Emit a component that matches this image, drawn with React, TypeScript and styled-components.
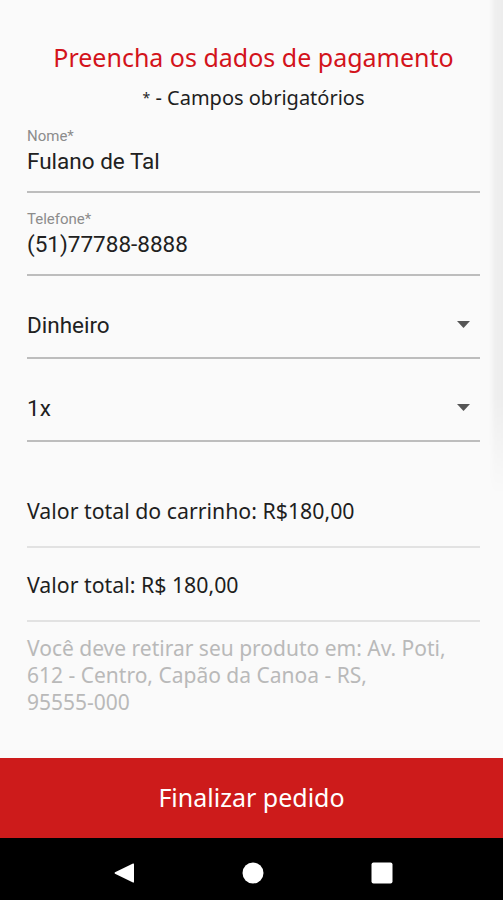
import React from "react";
import styled, { createGlobalStyle } from "styled-components";

const GlobalStyle = createGlobalStyle`
  html, body { margin: 0; padding: 0; background: #fafafa; }
  * { box-sizing: border-box; }
`;

const Screen = styled.div`
  position: relative;
  width: 503px;
  height: 900px;
  display: flex;
  flex-direction: column;
  background: #fafafa;
  overflow: hidden;
`;

const EdgeShade = styled.div`
  position: absolute;
  top: 0;
  right: 0;
  width: 14px;
  height: 495px;
  background: linear-gradient(to right, rgba(0,0,0,0) 0%, rgba(0,0,0,0.045) 45%, rgba(0,0,0,0.05) 100%);
  -webkit-mask-image: linear-gradient(to bottom, #000 0%, #000 80%, transparent 100%);
  mask-image: linear-gradient(to bottom, #000 0%, #000 80%, transparent 100%);
  pointer-events: none;
`;

const Content = styled.div`
  flex: 1;
  padding: 41px 23px 0 27px;
  display: flex;
  flex-direction: column;
`;

const Title = styled.h1`
  margin: 0;
  font-family: "Noto Sans", sans-serif;
  font-weight: 400;
  font-size: 25px;
  line-height: 32px;
  color: #d3131b;
  text-align: center;
`;

const Subtitle = styled.div`
  margin-top: 12px;
  font-family: "Noto Sans", sans-serif;
  font-size: 20px;
  line-height: 26px;
  color: #1e1e1e;
  text-align: center;
`;

const Star = styled.span`
  font-size: 14px;
  vertical-align: 2px;
`;

const Form = styled.div`
  margin-top: 16px;
  display: flex;
  flex-direction: column;
  gap: 17px;
`;

const FieldBox = styled.div`
  height: 66px;
  border-bottom: 2px solid #bdbdbd;
  display: flex;
  flex-direction: column;
`;

const Label = styled.div`
  font-family: Roboto, sans-serif;
  font-size: 15px;
  line-height: 18px;
  color: #8c8c8c;
`;

const Value = styled.div`
  margin-top: 2px;
  font-family: Roboto, sans-serif;
  font-size: 22.5px;
  line-height: 28px;
  color: #212121;
`;

const SelectBox = styled.div`
  height: 66px;
  border-bottom: 2px solid #bdbdbd;
  display: flex;
  align-items: flex-end;
  justify-content: space-between;
  padding: 0 10px 18px 0;
`;

const SelectValue = styled.div`
  font-family: Roboto, sans-serif;
  font-size: 22.5px;
  line-height: 28px;
  color: #212121;
`;

const Caret = styled.svg`
  width: 13px;
  height: 7px;
  margin-bottom: 11px;
  fill: #555;
`;

const Summary = styled.div`
  margin-top: 32px;
  display: flex;
  flex-direction: column;
`;

const SummaryRow = styled.div`
  padding: 23px 0 21px;
  border-bottom: 2px solid #e2e2e2;
  font-family: "Noto Sans", sans-serif;
  font-size: 21.3px;
  line-height: 28px;
  color: #1e1e1e;
`;

const Address = styled.div`
  margin-top: 13px;
  font-family: "Noto Sans", sans-serif;
  font-size: 21px;
  line-height: 27px;
  color: #b9b9b9;
  padding-right: 20px;
`;

const NoBreak = styled.span`
  white-space: nowrap;
`;

const FinishButton = styled.button`
  height: 80px;
  flex: none;
  border: none;
  margin: 0;
  width: 100%;
  background: #cd1b1b;
  color: #fff;
  font-family: "Noto Sans", sans-serif;
  font-size: 25px;
  display: flex;
  align-items: center;
  justify-content: center;
  padding: 0 0 2px;
`;

const NavBar = styled.nav`
  height: 62px;
  flex: none;
  background: #000;
  display: grid;
  grid-template-columns: 113px 22px 107px 22px 107px 22px 1fr;
  align-items: center;
  padding-top: 8px;
`;

const NavIcon = styled.svg<{ $col: number }>`
  grid-column: ${(p) => p.$col};
  width: 22px;
  height: 22px;
  fill: #fff;
`;

function TextField({ label, value }: { label: string; value: string }) {
  return (
    <FieldBox>
      <Label>{label}</Label>
      <Value>{value}</Value>
    </FieldBox>
  );
}

function SelectField({ value }: { value: string }) {
  return (
    <SelectBox>
      <SelectValue>{value}</SelectValue>
      <Caret viewBox="0 0 13 7">
        <path d="M0 0 L13 0 L6.5 7 Z" />
      </Caret>
    </SelectBox>
  );
}

export default function App() {
  return (
    <>
      <GlobalStyle />
      <Screen>
        <Content>
          <Title>Preencha os dados de pagamento</Title>
          <Subtitle>
            <Star>*</Star> - Campos obrigatórios
          </Subtitle>
          <Form>
            <TextField label="Nome*" value="Fulano de Tal" />
            <TextField label="Telefone*" value="(51)77788-8888" />
            <SelectField value="Dinheiro" />
            <SelectField value="1x" />
          </Form>
          <Summary>
            <SummaryRow>Valor total do carrinho: R$180,00</SummaryRow>
            <SummaryRow>Valor total: R$ 180,00</SummaryRow>
          </Summary>
          <Address>
            Você deve retirar seu produto em: Av. Poti, 612 - Centro, Capão da Canoa - RS,{" "}
            <NoBreak>95555-000</NoBreak>
          </Address>
        </Content>
        <FinishButton>Finalizar pedido</FinishButton>
        <NavBar>
          <NavIcon $col={2} viewBox="0 0 22 22">
            <path d="M20 1.5 Q21 1 21 2.5 L21 19.5 Q21 21 20 20.5 L2 11.8 Q1 11 2 10.2 Z" />
          </NavIcon>
          <NavIcon $col={4} viewBox="0 0 22 22">
            <circle cx="11" cy="11" r="10.5" />
          </NavIcon>
          <NavIcon $col={6} viewBox="0 0 22 22">
            <rect x="0.5" y="0.5" width="21" height="21" rx="2" />
          </NavIcon>
        </NavBar>
        <EdgeShade />
      </Screen>
    </>
  );
}
